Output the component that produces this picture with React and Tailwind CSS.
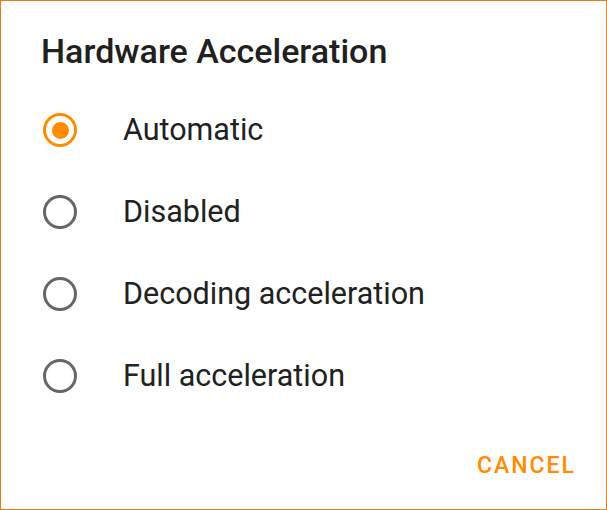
import React from 'react';

const options = ['Automatic', 'Disabled', 'Decoding acceleration', 'Full acceleration'];

const Radio = ({ checked }) => (
  <div
    className={`w-[34px] h-[34px] rounded-full flex items-center justify-center shrink-0 ${
      checked ? 'border-[3.5px] border-[#ff8c00]' : 'border-[3px] border-[#666666]'
    }`}
  >
    {checked && <div className="w-[17px] h-[17px] rounded-full bg-[#ff8c00]" />}
  </div>
);

export default function App() {
  const selected = 0;
  return (
    <div
      className="w-[607px] h-[510px] bg-white border border-[#ef7a12] flex flex-col"
      style={{ fontFamily: 'Roboto, "Liberation Sans", sans-serif' }}
    >
      <div className="pl-[40px] pt-[30px] text-[34px] leading-[40px] font-medium text-[#202020]">
        Hardware Acceleration
      </div>
      <div className="flex flex-col mt-[18px]">
        {options.map((opt, i) => (
          <div key={opt} className="h-[82px] flex items-center pl-[42px]">
            <Radio checked={i === selected} />
            <span className="ml-[46px] text-[30.5px] leading-[36px] text-[#212121]">{opt}</span>
          </div>
        ))}
      </div>
      <div className="flex justify-end pr-[30px] mt-[35px]">
        <span className="text-[23px] leading-[28px] font-medium tracking-[2px] text-[#ff8c00]">CANCEL</span>
      </div>
    </div>
  );
}
